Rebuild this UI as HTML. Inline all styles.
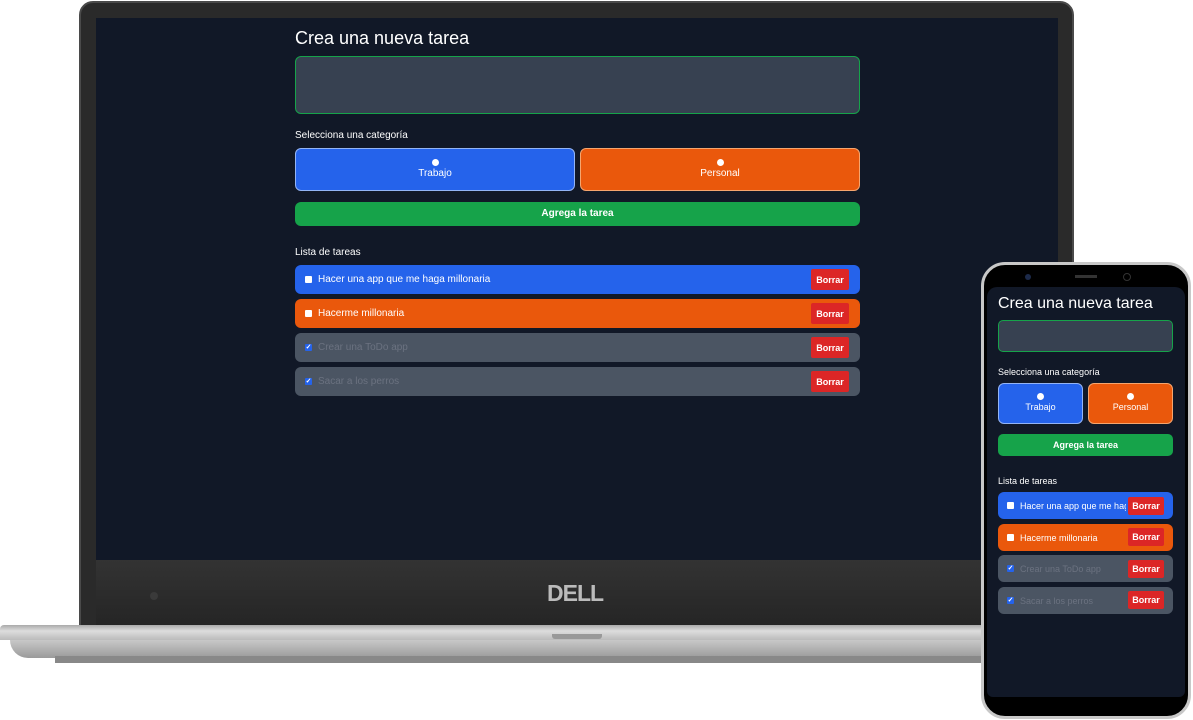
<!DOCTYPE html>
<html><head><meta charset="utf-8"><style>
*{box-sizing:border-box;margin:0;padding:0}
body{width:1193px;height:720px;background:#fff;position:relative;overflow:hidden;font-family:"Liberation Sans",sans-serif;color:#fff}
.a{position:absolute}
.t{font-size:10px;white-space:nowrap}
.task{position:absolute;border-radius:6px;display:flex;align-items:center;font-size:10px;white-space:nowrap;overflow:hidden}
.cb{width:7px;height:7px;background:#fff;border-radius:1px;margin:0 6px 0 10px;flex:none}
.cbc{background:#2563eb;position:relative;color:#fff;font-size:7px;line-height:7px;text-align:center;font-weight:bold}
.bor{position:absolute;background:#dc2626;font-weight:bold;font-size:9px;display:flex;align-items:center;justify-content:center;border-radius:2px}
.cat{position:absolute;border-radius:6px;text-align:center;font-size:10px;line-height:15px}
.dot{width:7px;height:7px;border-radius:50%;background:#fff;margin:0 auto}
</style></head><body>
<!-- laptop -->
<div class="a" style="left:79px;top:1px;width:995px;height:628px;background:#2a2a2a;border-radius:14px 14px 0 0;border:2px solid #4a4a4a"></div>
<div class="a" style="left:96px;top:18px;width:962px;height:542px;background:#111827"></div>
<div class="a" style="left:96px;top:560px;width:962px;height:66px;background:linear-gradient(#333,#252525)"></div>
<div class="a" style="left:150px;top:592px;width:8px;height:8px;border-radius:50%;background:#3a3a3a"></div>
<div class="a" style="left:547px;top:580px;font-weight:bold;font-size:23px;color:#bbb;letter-spacing:-1px">DELL</div>
<div class="a" style="left:0;top:625px;width:1000px;height:15px;background:linear-gradient(#aaa,#ddd 40%,#bbb);border-radius:4px 0 0 0"></div>
<div class="a" style="left:10px;top:640px;width:990px;height:18px;background:linear-gradient(#c8c8c8,#9a9a9a);border-radius:0 0 0 40px"></div>
<div class="a" style="left:55px;top:656px;width:940px;height:7px;background:#888"></div>
<div class="a" style="left:552px;top:634px;width:50px;height:5px;background:#999;border-radius:0 0 3px 3px"></div>
<!-- laptop app -->
<div class="a" style="left:295px;top:28px;font-size:18px">Crea una nueva tarea</div>
<div class="a" style="left:295px;top:56px;width:565px;height:58px;background:#374151;border:1px solid #16a34a;border-radius:6px"></div>
<div class="a t" style="left:295px;top:130px">Selecciona una categoría</div>
<div class="cat" style="left:295px;top:148px;width:280px;height:43px;background:#2563eb;border:1px solid #93b4f5;padding-top:10px"><div class="dot"></div>Trabajo</div>
<div class="cat" style="left:580px;top:148px;width:280px;height:43px;background:#ea580c;border:1px solid #f5a56e;padding-top:10px"><div class="dot"></div>Personal</div>
<div class="a" style="left:295px;top:202px;width:565px;height:24px;background:#16a34a;border-radius:6px;font-weight:bold;font-size:10px;text-align:center;line-height:24px">Agrega la tarea</div>
<div class="a t" style="left:295px;top:247px">Lista de tareas</div>
<div class="task" style="left:295px;top:265px;width:565px;height:29px;background:#2563eb"><div class="cb"></div>Hacer una app que me haga millonaria</div>
<div class="bor" style="left:811px;top:269px;width:38px;height:21px">Borrar</div>
<div class="task" style="left:295px;top:299px;width:565px;height:29px;background:#ea580c"><div class="cb"></div>Hacerme millonaria</div>
<div class="bor" style="left:811px;top:303px;width:38px;height:21px">Borrar</div>
<div class="task" style="left:295px;top:333px;width:565px;height:29px;background:#4b5563;color:#6b7280"><div class="cb cbc">✓</div>Crear una ToDo app</div>
<div class="bor" style="left:811px;top:337px;width:38px;height:21px">Borrar</div>
<div class="task" style="left:295px;top:367px;width:565px;height:29px;background:#4b5563;color:#6b7280"><div class="cb cbc">✓</div>Sacar a los perros</div>
<div class="bor" style="left:811px;top:371px;width:38px;height:21px">Borrar</div>
<!-- phone -->
<div class="a" style="left:981px;top:262px;width:210px;height:457px;background:#000;border:3px solid #c8c8c8;border-radius:24px"></div>
<div class="a" style="left:987px;top:287px;width:198px;height:410px;background:#111827;border-radius:10px 10px 6px 6px"></div>
<div class="a" style="left:1025px;top:274px;width:6px;height:6px;border-radius:50%;background:#1c2a4a"></div>
<div class="a" style="left:1075px;top:275px;width:22px;height:3px;background:#333"></div>
<div class="a" style="left:1123px;top:273px;width:8px;height:8px;border-radius:50%;border:1px solid #333"></div>
<!-- phone app -->
<div class="a" style="left:998px;top:295px;font-size:16px">Crea una nueva tarea</div>
<div class="a" style="left:998px;top:320px;width:175px;height:32px;background:#374151;border:1px solid #16a34a;border-radius:5px"></div>
<div class="a" style="left:998px;top:367px;font-size:9px;white-space:nowrap">Selecciona una categoría</div>
<div class="cat" style="left:998px;top:383px;width:85px;height:41px;background:#2563eb;border:1px solid #93b4f5;padding-top:9px;font-size:9px"><div class="dot"></div>Trabajo</div>
<div class="cat" style="left:1088px;top:383px;width:85px;height:41px;background:#ea580c;border:1px solid #f5a56e;padding-top:9px;font-size:9px"><div class="dot"></div>Personal</div>
<div class="a" style="left:998px;top:434px;width:175px;height:22px;background:#16a34a;border-radius:5px;font-weight:bold;font-size:9px;text-align:center;line-height:22px">Agrega la tarea</div>
<div class="a" style="left:998px;top:476px;font-size:9px;white-space:nowrap">Lista de tareas</div>
<div class="task" style="left:998px;top:492px;width:175px;height:27px;background:#2563eb;font-size:9px"><div class="cb" style="margin-left:9px"></div><span style="width:106px;overflow:hidden">Hacer una app que me haga millonaria</span></div>
<div class="bor" style="left:1128px;top:497px;width:36px;height:18px">Borrar</div>
<div class="task" style="left:998px;top:524px;width:175px;height:27px;background:#ea580c;font-size:9px"><div class="cb" style="margin-left:9px"></div>Hacerme millonaria</div>
<div class="bor" style="left:1128px;top:528px;width:36px;height:18px">Borrar</div>
<div class="task" style="left:998px;top:555px;width:175px;height:27px;background:#4b5563;color:#6b7280;font-size:9px"><div class="cb cbc" style="margin-left:9px">✓</div>Crear una ToDo app</div>
<div class="bor" style="left:1128px;top:560px;width:36px;height:18px">Borrar</div>
<div class="task" style="left:998px;top:587px;width:175px;height:27px;background:#4b5563;color:#6b7280;font-size:9px"><div class="cb cbc" style="margin-left:9px">✓</div>Sacar a los perros</div>
<div class="bor" style="left:1128px;top:591px;width:36px;height:18px">Borrar</div>
</body></html>
